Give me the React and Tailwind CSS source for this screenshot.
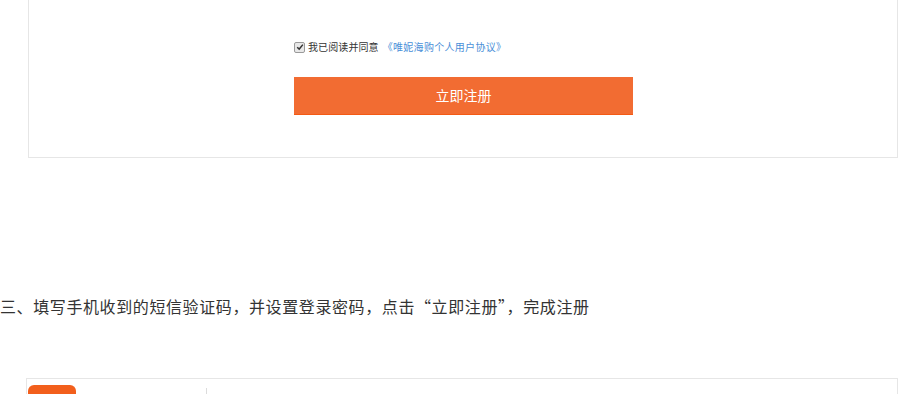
export default function App() {
  return (
    <div
      className="w-[920px] h-[394px] overflow-hidden bg-white text-[#333]"
      style={{ fontFamily: '"Microsoft YaHei", "Noto Sans CJK SC", "Liberation Sans", sans-serif' }}
    >
      {/* Register form box (top part cut off) */}
      <div className="ml-[28px] w-[870px] h-[158px] border border-t-0 border-[#e6e6e6] pl-[265px] pt-[40px]">
        <div className="flex items-center h-[14px]">
          <span className="w-[11px] h-[11px] border border-[#9a9a9a] bg-[#e8e8e8] rounded-[2px] flex items-center justify-center">
            <svg viewBox="0 0 10 10" className="w-[8px] h-[8px]">
              <path d="M1.5 5.2 L4 7.6 L8.6 2" fill="none" stroke="#333" strokeWidth="1.8" />
            </svg>
          </span>
          <span className="ml-[3px] text-[10px] leading-none tracking-[0.1px]">我已阅读并同意</span>
          <a href="#" className="ml-[4px] text-[10px] leading-none tracking-[0.3px] text-[#4a8fd8]">
            《唯妮海购个人用户协议》
          </a>
        </div>
        <button className="mt-[23px] w-[339px] h-[38px] bg-[#f26c32] border-b border-[#f45a14] text-white text-[14px] flex items-center justify-center">
          立即注册
        </button>
      </div>

      {/* Step heading */}
      <h3 className="mt-[136px] text-[16px] leading-[24px] tracking-[0.6px] text-[#333]">
        三、填写手机收到的短信验证码，并设置登录密码，点击“立即注册”，完成注册
      </h3>

      {/* Next box (cut off at bottom) */}
      <div className="mt-[60px] ml-[26px] w-[872px] h-[40px] border border-[#e6e6e6] flex items-start pt-[6px] pl-[1px]">
        <div className="w-[48px] h-[30px] bg-[#f25f1c] rounded-t-[6px]" />
        <div className="ml-[130px] mt-[3px] w-px h-[20px] bg-[#dcdcdc]" />
      </div>
    </div>
  );
}
